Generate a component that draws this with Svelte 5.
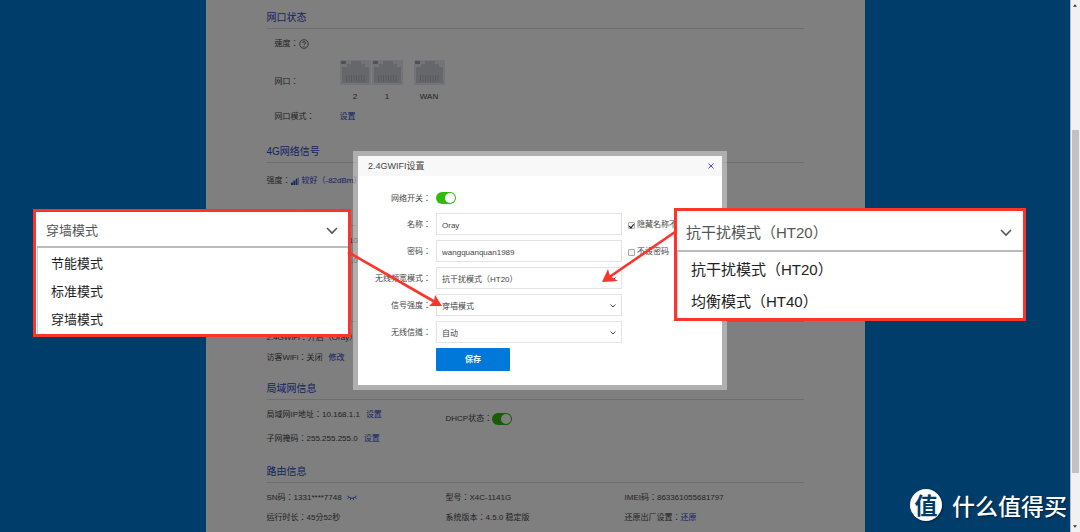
<script>
    let hideName = true;
    let noPassword = false;
    let name = "Oray";
    let password = "wangquanquan1989";

    const selects = [
        { id: "bandwidth", label: "无线频宽模式：", value: "抗干扰模式（HT20）", options: ["抗干扰模式（HT20）", "均衡模式（HT40）"] },
        { id: "strength", label: "信号强度：", value: "穿墙模式", options: ["节能模式", "标准模式", "穿墙模式"] },
        { id: "channel", label: "无线信道：", value: "自动", options: ["自动"] },
    ];

    const ports = ["2", "1", "WAN"];

    const callouts = [
        { side: "left", value: "穿墙模式", options: ["节能模式", "标准模式", "穿墙模式"] },
        { side: "right", value: "抗干扰模式（HT20）", options: ["抗干扰模式（HT20）", "均衡模式（HT40）"] },
    ];
</script>

<div class="screen">
    <div class="page">
        <main class="panel">
            <section class="ports-section">
                <h2>网口状态</h2>
                <div class="body indent">
                    <div class="row">
                        速度：<svg class="help" viewBox="0 0 10 10" width="10" height="10">
                            <circle cx="5" cy="5" r="4.3" fill="none" stroke="#444" stroke-width="0.8" />
                            <path d="M3.6 4a1.4 1.4 0 1 1 2.1 1.2Q5 5.500 5 6.200M5 7v0.900" fill="none" stroke="#444" stroke-width="0.9" />
                        </svg>
                    </div>
                    <div class="row ports-row">
                        <span class="port-label">网口：</span>
                        <div class="ports">
                            {#each ports as port (port)}
                                <div class="port" class:wan={port === "WAN"}>
                                    <svg viewBox="0 0 31 25" width="31" height="25">
                                        <rect width="31" height="25" fill="#e4e8ef" />
                                        <rect x="1" y="1" width="5" height="3" fill="#a0a4ac" />
                                        <path d="M2 23V7h5V4h4V1h10v3h4v3h4v16z" fill="#cbced5" />
                                        <path d="M6.500 15v7M9 15v7M11.500 15v7M14 15v7M16.500 15v7M19 15v7M21.500 15v7M24 15v7" stroke="#aeb2ba" />
                                    </svg>
                                    <span>{port}</span>
                                </div>
                            {/each}
                        </div>
                    </div>
                    <div class="row">
                        <span class="port-label">网口模式：</span><a href="#mode">设置</a>
                    </div>
                </div>
            </section>

            <section class="signal-section">
                <h2>4G网络信号</h2>
                <div class="body">
                    <div class="row">
                        强度：<svg class="signal" viewBox="0 0 8 8" width="8" height="8">
                            <path d="M0 5.500h2V8H0zM2.400 3.500h2V8h-2z" fill="#1a56c8" />
                            <path d="M4.800 1.500h1.600V8H4.800z" fill="#1a56c8" />
                            <path d="M7.200 0.500H8V8H7.200z" fill="#8a8fa8" />
                        </svg><a href="#signal">较好（-82dBm）</a>
                    </div>
                </div>
            </section>

            <section class="wan-section">
                <h2>外网信息</h2>
                <div class="body">
                    <div class="row">网关地址：10.168.100.10</div>
                    <div class="row">子网掩码：255.255.255.0</div>
                </div>
            </section>

            <section class="wifi-section">
                <h2>WiFi信息</h2>
                <div class="body">
                    <div class="row">2.4GWiFi：开启（Oray）</div>
                    <div class="row">访客WiFi：关闭<a class="after" href="#guest">修改</a></div>
                </div>
            </section>

            <section class="lan-section">
                <h2>局域网信息</h2>
                <div class="body columns">
                    <div class="row">局域网IP地址：10.168.1.1<a class="after" href="#lan">设置</a></div>
                    <div class="row dhcp">
                        <label for="dhcp">DHCP状态：</label>
                        <input id="dhcp" class="switch" type="checkbox" checked />
                    </div>
                    <div class="row mask">子网掩码：255.255.255.0<a class="after" href="#mask">设置</a></div>
                </div>
            </section>

            <section>
                <h2>路由信息</h2>
                <div class="body columns">
                    <div class="row">
                        SN码：1331****7748
                        <svg class="eye" viewBox="0 0 10 6" width="10" height="6">
                            <path d="M0.500 1Q5 5.500 9.500 1M1.700 2.300L0.700 3.700M3.700 3.300L3.300 5M6.300 3.300L6.700 5M8.300 2.300L9.300 3.700" fill="none" stroke="#2a4fd0" stroke-width="0.9" />
                        </svg>
                    </div>
                    <div class="row">型号：X4C-1141G</div>
                    <div class="row">IMEI码：863361055681797</div>
                    <div class="row">运行时长：45分52秒</div>
                    <div class="row">系统版本：4.5.0 稳定版</div>
                    <div class="row">还原出厂设置：<a href="#reset">还原</a></div>
                </div>
            </section>
        </main>
    </div>

    <div class="scrollbar">
        <svg viewBox="0 0 6 4" width="4" height="3"><path d="M0 4L3 0L6 4z" fill="#333" /></svg>
        <div class="track">
            <div class="thumb"></div>
        </div>
        <svg viewBox="0 0 6 4" width="4" height="3"><path d="M0 0L3 4L6 0z" fill="#333" /></svg>
    </div>

    <div class="overlay">
        <div class="modal" role="dialog" aria-labelledby="modal-title">
            <header>
                <span id="modal-title">2.4GWIFI设置</span>
                <button class="close" aria-label="关闭">
                    <svg viewBox="0 0 6 6" width="6" height="6"><path d="M0.500 0.500L5.500 5.500M5.500 0.500L0.500 5.500" stroke="#4a4ae8" /></svg>
                </button>
            </header>
            <form on:submit|preventDefault>
                <div class="field short">
                    <label class="name" for="power">网络开关：</label>
                    <input id="power" class="switch" type="checkbox" checked />
                </div>
                <div class="field">
                    <label class="name" for="ssid">名称：</label>
                    <input id="ssid" class="control" type="text" bind:value={name} />
                    <label class="check"><input type="checkbox" bind:checked={hideName} />隐藏名称不</label>
                </div>
                <div class="field">
                    <label class="name" for="password">密码：</label>
                    <input id="password" class="control" type="text" bind:value={password} />
                    <label class="check"><input type="checkbox" bind:checked={noPassword} />不设密码</label>
                </div>
                {#each selects as item (item.id)}
                    <div class="field">
                        <label class="name" for={item.id}>{item.label}</label>
                        <div class="select">
                            <select id={item.id} class="control" bind:value={item.value}>
                                {#each item.options as option}
                                    <option value={option}>{option}</option>
                                {/each}
                            </select>
                            <svg viewBox="0 0 6 4" width="6" height="4"><path d="M0.500 0.500L3 3L5.500 0.500" fill="none" stroke="#444" /></svg>
                        </div>
                    </div>
                {/each}
                <button class="save">保存</button>
            </form>
        </div>
    </div>

    {#each callouts as box (box.side)}
        <div class="callout {box.side}">
            <button class="current">
                {box.value}
                <svg viewBox="0 0 12 8" width="12" height="8"><path d="M1 1L6 6L11 1" fill="none" stroke="#555" stroke-width="1.6" /></svg>
            </button>
            <ul>
                {#each box.options as option}
                    <li>{option}</li>
                {/each}
            </ul>
        </div>
    {/each}

    <svg class="arrows">
        <path d="M348 252L435 302M675 232L608 278" stroke="#fb352c" stroke-width="2.6" />
        <path d="M442 306L435 295L434 301L429 306z" fill="#fb352c" />
        <path d="M602 282L608 269L610 276L618 281z" fill="#fb352c" />
    </svg>

    <div class="brand">
        <span class="badge">值</span>
        <span>什么值得买</span>
    </div>
</div>

<style>
    :global(body) {
        margin: 0;
    }

    .screen {
        position: relative;
        display: flex;
        height: 100vh;
        overflow: hidden;
        font: 8px/20px "Liberation Sans", "Noto Sans CJK TC", sans-serif;
        color: #444;
    }

    .page {
        position: relative;
        flex: 1;
        display: flex;
        justify-content: center;
        background: #007ad6;
    }

    .page::after {
        content: "";
        position: absolute;
        inset: 0;
        background: rgba(0, 0, 0, 0.5);
    }

    .panel {
        box-sizing: border-box;
        width: 100%;
        max-width: 659px;
        padding: 6px 61px 0;
        background: #fff;
    }

    h2 {
        margin: 0;
        padding-top: 2px;
        border-bottom: 1px solid #dcdcdc;
        font-size: 10px;
        line-height: 20px;
        font-weight: 400;
        color: #2c44c4;
    }

    a {
        color: #2c44c4;
        text-decoration: none;
    }

    .body {
        padding-top: 5px;
    }

    .indent {
        padding-left: 8px;
    }

    .row {
        display: flex;
        align-items: center;
        min-height: 20px;
        white-space: nowrap;
    }

    .columns {
        display: grid;
        grid-template-columns: repeat(3, 1fr);
        align-items: start;
    }

    .ports-section {
        padding-bottom: 13px;
    }

    .signal-section {
        padding-bottom: 12px;
    }

    .signal-section .body {
        padding-top: 8px;
    }

    .wan-section {
        padding-bottom: 28px;
    }

    .wifi-section {
        padding-bottom: 9px;
    }

    .wifi-section .body {
        padding-top: 6px;
    }

    .lan-section {
        padding-bottom: 11px;
    }

    .dhcp {
        padding-top: 4px;
    }

    .mask {
        grid-column: 1;
    }

    .port-label {
        width: 65px;
    }

    .ports-row {
        padding-top: 6px;
    }

    .ports-row .port-label {
        padding-bottom: 4px;
    }

    .ports {
        display: flex;
        gap: 1px;
    }

    .port {
        display: flex;
        flex-direction: column;
        align-items: center;
        gap: 2px;
    }

    .wan {
        margin-left: 10px;
    }

    .signal {
        margin-right: 3px;
    }

    .after {
        margin-left: 6px;
    }

    .eye {
        margin-left: 5px;
    }

    .switch {
        appearance: none;
        display: flex;
        justify-content: flex-end;
        align-items: center;
        box-sizing: border-box;
        width: 20px;
        height: 12px;
        margin: 0;
        padding: 1px;
        border-radius: 6px;
        background: #31bb0b;
    }

    .switch::after {
        content: "";
        width: 10px;
        height: 10px;
        border-radius: 50%;
        background: #fff;
    }

    .scrollbar {
        box-sizing: border-box;
        display: flex;
        flex-direction: column;
        align-items: center;
        width: 10px;
        padding: 4px 1px 4px 0;
        border-left: 1px solid #b9b9dc;
        background: #f1f1f1;
    }

    .track {
        flex: 1;
        display: flex;
        flex-direction: column;
        width: 7px;
    }

    .track::before {
        content: "";
        flex: 123;
    }

    .track::after {
        content: "";
        flex: 52;
    }

    .thumb {
        flex: 343;
        background: #c1c1c1;
    }

    .overlay {
        position: absolute;
        inset: 0;
        display: flex;
        justify-content: center;
        align-items: flex-start;
        padding-top: 151px;
    }

    .modal {
        width: 364px;
        border: 5px solid rgba(255, 255, 255, 0.38);
        background: #fff;
        background-clip: padding-box;
    }

    header {
        display: flex;
        justify-content: space-between;
        align-items: center;
        padding: 0 8px 0 10px;
        background: #f8f8f8;
        font-size: 9px;
        line-height: 20px;
    }

    button {
        border: 0;
        padding: 0;
        background: none;
        font: inherit;
        color: inherit;
    }

    .close {
        display: flex;
    }

    form {
        display: flex;
        flex-direction: column;
        gap: 5px;
        padding: 12px 0 14px;
    }

    .field {
        display: flex;
        align-items: center;
        height: 22px;
        white-space: nowrap;
    }

    .short {
        height: 20px;
    }

    .name {
        width: 73px;
        margin-right: 5px;
        padding-top: 2px;
        text-align: right;
    }

    .control {
        appearance: none;
        box-sizing: border-box;
        width: 186px;
        height: 22px;
        margin: 0;
        padding: 2px 5px 0;
        border: 1px solid #e3e3e3;
        border-radius: 0;
        background: #fff;
        font: inherit;
        color: #444;
    }

    .select {
        position: relative;
        display: flex;
    }

    .select svg {
        position: absolute;
        top: 10px;
        right: 6px;
        pointer-events: none;
    }

    .check {
        display: flex;
        align-items: center;
        gap: 2px;
        margin-left: 6px;
        padding-top: 2px;
    }

    .check input {
        appearance: none;
        display: flex;
        justify-content: center;
        box-sizing: border-box;
        width: 7px;
        height: 7px;
        margin: 0;
        border: 1px solid #aaa;
        border-radius: 1px;
        background: #f4f4f4;
    }

    .check input:checked::after {
        content: "";
        box-sizing: border-box;
        width: 3px;
        height: 5px;
        border: solid #111;
        border-width: 0 1px 1px 0;
        transform: rotate(40deg);
    }

    .save {
        width: 74px;
        height: 23px;
        margin-left: 78px;
        border-radius: 1px;
        background: #0078d9;
        font-weight: 700;
        color: #fff;
    }

    .callout {
        position: absolute;
        box-sizing: border-box;
        border: 3px solid #fb352c;
        background: #fff;
        font-family: "Liberation Sans", "Noto Sans CJK SC", sans-serif;
        color: #222;
    }

    .left {
        top: 209px;
        left: 33px;
        width: 318px;
        padding-left: 1px;
        font-size: 13px;
        line-height: 28px;
    }

    .right {
        top: 208px;
        left: 674px;
        width: 352px;
        font-size: 15px;
        line-height: 32px;
    }

    .current {
        display: flex;
        justify-content: space-between;
        align-items: center;
        box-sizing: border-box;
        width: 100%;
        border-bottom: 2px solid #bbb;
        color: #555;
    }

    .left .current {
        height: 36px;
        padding: 4px 10px 0 9px;
    }

    .right .current {
        height: 41px;
        padding: 4px 11px 0 9px;
    }

    ul {
        margin: 0;
        padding: 2px 0 0 13px;
        border-left: 1px solid #ccc;
        list-style: none;
    }

    .arrows {
        position: absolute;
        inset: 0;
        width: 100%;
        height: 100%;
        pointer-events: none;
    }

    .brand {
        position: absolute;
        right: 13px;
        bottom: 11px;
        display: flex;
        align-items: center;
        gap: 10px;
        font: 500 23px/32px "Noto Sans CJK SC", sans-serif;
        color: #fff;
        text-shadow: 1px 1px 2px rgba(0, 0, 0, 0.5);
    }

    .badge {
        width: 32px;
        height: 32px;
        border-radius: 50%;
        background: #fff;
        box-shadow: 1px 1px 2px rgba(0, 0, 0, 0.4);
        font-weight: 700;
        line-height: 30px;
        text-align: center;
        text-shadow: none;
        color: #003d6b;
    }
</style>
